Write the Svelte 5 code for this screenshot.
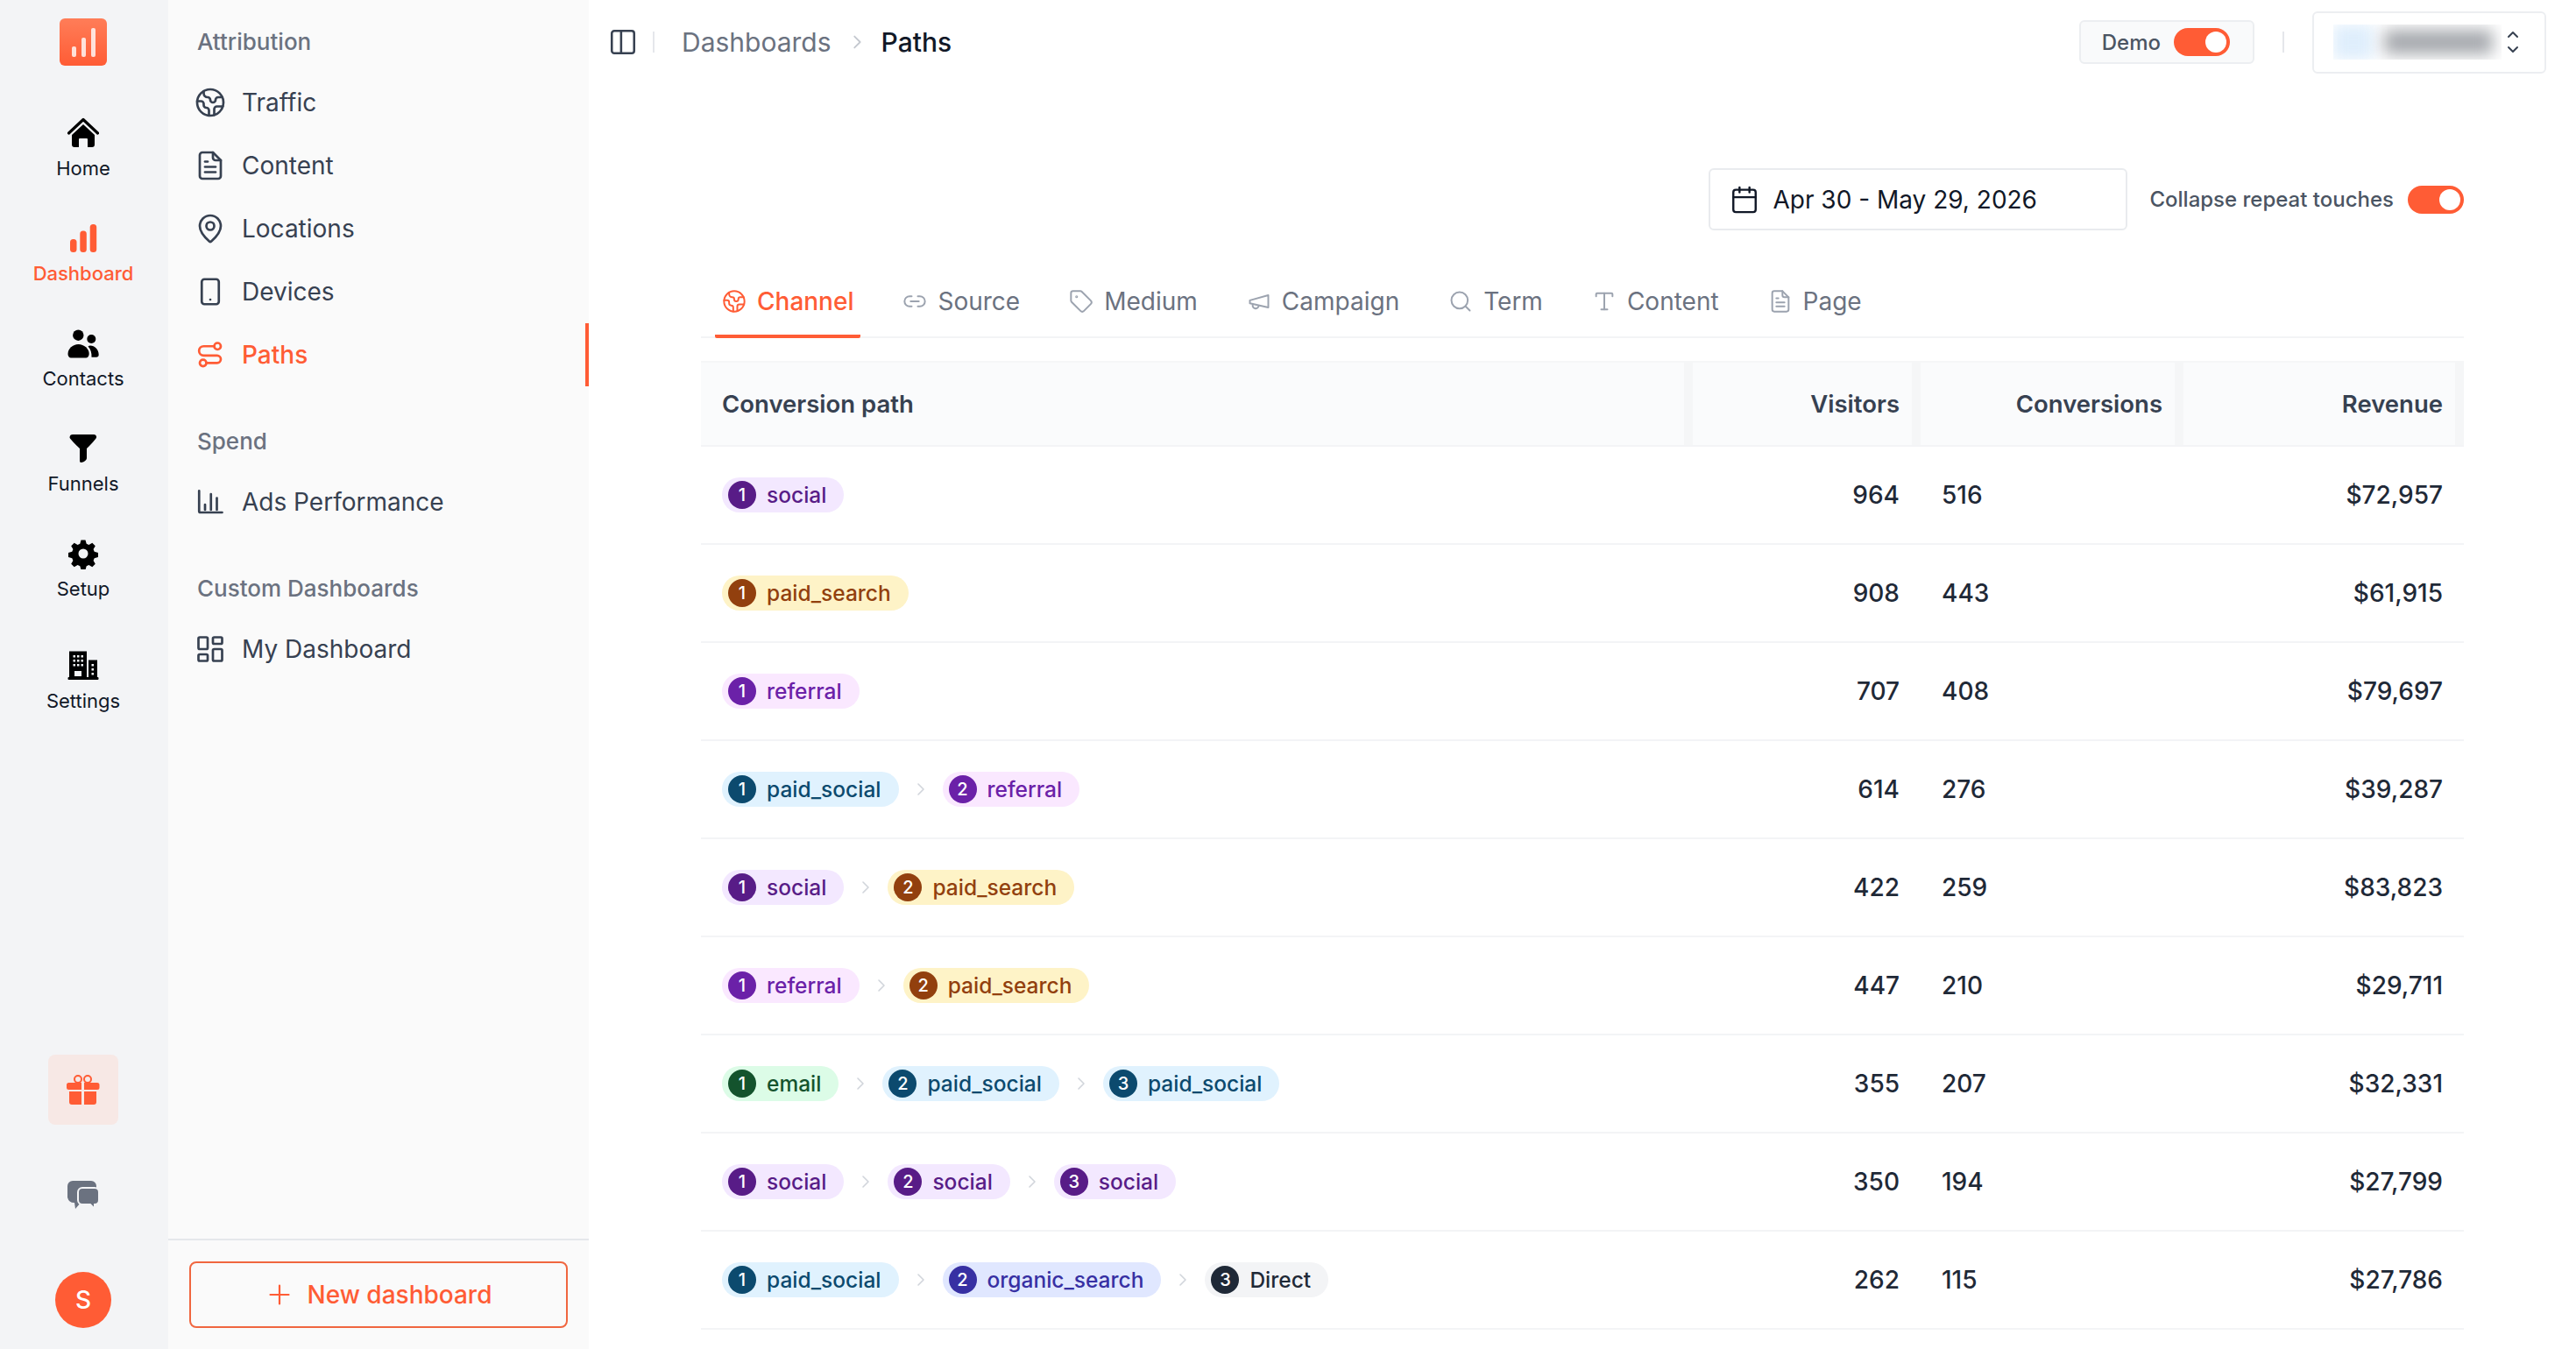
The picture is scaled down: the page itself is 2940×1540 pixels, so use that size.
<script>
	const icons = {
		earth:
			'<path d="M21.54 15H17a2 2 0 0 0-2 2v4.54"/><path d="M7 3.34V5a3 3 0 0 0 3 3a2 2 0 0 1 2 2c0 1.1.9 2 2 2a2 2 0 0 0 2-2c0-1.1.9-2 2-2h3.17"/><path d="M11 21.95V18a2 2 0 0 0-2-2a2 2 0 0 1-2-2v-1a2 2 0 0 0-2-2H2.05"/><circle cx="12" cy="12" r="10"/>',
		file: '<path d="M14 2H6a2 2 0 0 0-2 2v16a2 2 0 0 0 2 2h12a2 2 0 0 0 2-2V8z"/><path d="M14 2v4a2 2 0 0 0 2 2h4"/><path d="M8 13h8"/><path d="M8 17h8"/><path d="M8 9h2"/>',
		pin: '<path d="M20 10c0 4.993-5.539 10.193-7.399 11.799a1 1 0 0 1-1.202 0C9.539 20.193 4 14.993 4 10a8 8 0 0 1 16 0"/><circle cx="12" cy="10" r="3"/>',
		tablet: '<rect x="5.5" y="2.5" width="13" height="19" rx="2"/><path d="M12 18h.01"/>',
		route:
			'<circle cx="17.5" cy="5.5" r="2.5"/><circle cx="6.5" cy="18.2" r="2.5"/><path d="M15 5.5H7a3.55 3.55 0 0 0 0 7.1h10.2a2.8 2.8 0 0 1 0 5.6H9"/>',
		chart: '<path d="M3.5 3.5V19a1 1 0 0 0 1 1H21"/><path d="M8 18v-4"/><path d="M12.5 18V6"/><path d="M17 18V9"/>',
		grid: '<rect x="3" y="3" width="7" height="9" rx="1"/><rect x="14" y="3" width="7" height="5" rx="1"/><rect x="14" y="12" width="7" height="9" rx="1"/><rect x="3" y="16" width="7" height="5" rx="1"/>',
		link: '<path d="M9 17H7A5 5 0 0 1 7 7h2"/><path d="M15 7h2a5 5 0 1 1 0 10h-2"/><path d="M8 12h8"/>',
		tag: '<path d="M12.586 2.586A2 2 0 0 0 11.172 2H4a2 2 0 0 0-2 2v7.172a2 2 0 0 0 .586 1.414l8.704 8.704a2.426 2.426 0 0 0 3.42 0l6.58-6.58a2.426 2.426 0 0 0 0-3.42z"/><circle cx="7.5" cy="7.5" r=".5"/>',
		megaphone: '<path d="m3 11 18-5v12L3 14v-3z"/><path d="M11.6 16.8a3 3 0 1 1-5.8-1.6"/>',
		search: '<path d="m21 21-4.34-4.34"/><circle cx="11" cy="11" r="8"/>',
		type: '<path d="M12 4v16"/><path d="M4 7V5a1 1 0 0 1 1-1h14a1 1 0 0 1 1 1v2"/><path d="M9 20h6"/>'
	};

	const railIcons = {
		home: '<path d="M1.5 18 18 2.5 34.500 18" fill="none" stroke="currentColor" stroke-width="3.2" stroke-linecap="round" stroke-linejoin="round"/><path d="M5 20 18 8l13 12v11a3 3 0 0 1-3 3h-5v-9a1 1 0 0 0-1-1h-8a1 1 0 0 0-1 1v9H8a3 3 0 0 1-3-3z"/>',
		dashboard:
			'<rect x="3" y="19" width="7.500" height="15" rx="3.500"/><rect x="14.300" y="9.500" width="7.500" height="24.500" rx="3.500"/><rect x="25.700" y="2" width="7.500" height="32" rx="3.500"/>',
		contacts:
			'<circle cx="12.300" cy="8.700" r="6.200"/><path d="M.5 30C.5 24 6 19 12.500 19S24.700 24 24.700 30c0 2.500-1.700 4.500-3.700 4.500H4C2 34.500.5 32.500.5 30z"/><circle cx="27.300" cy="13" r="5"/><path d="M26 20.500c5 0 9.700 4.500 9.700 10.500 0 1.800-1.200 2.800-2.700 2.800h-5.500c.3-5-1-9.300-4-12.300.8-.7 1.500-1 2.500-1z"/>',
		funnels:
			'<path d="M2.500 5.500C2.500 3 4 2 6 2h24c2 0 3.500 1.500 3 3.500-1 2.500-8 9.500-11 12.500v11c0 2-3.500 5-6.500 5-1 0-1.500-.7-1.500-2V18C11 15 3.500 8 2.500 5.500z"/>',
		setup:
			'<path fill-rule="evenodd" d="M15.500 2.500h5l1.200 4.300 2.700 1.100 3.900-2.200 3.500 3.500-2.200 3.900 1.100 2.700 4.300 1.200v5l-4.300 1.200-1.100 2.700 2.200 3.900-3.500 3.500-3.900-2.200-2.700 1.100-1.200 4.300h-5l-1.200-4.300-2.700-1.100-3.900 2.200-3.500-3.500 2.200-3.900-1.100-2.700-4.300-1.200v-5l4.300-1.200 1.100-2.700-2.200-3.900 3.500-3.500 3.900 2.200 2.700-1.100zM18 12.500a5.500 5.500 0 1 0 0 11 5.500 5.500 0 0 0 0-11z"/>',
		settings:
			'<path fill-rule="evenodd" d="M2 1.500h20v31h-20zM6.500 6v2.500h2.500V6zM11 6v2.500h2.500V6zM15.500 6v2.500H18V6zM6.500 11v2.500h2.500V11zM11 11v2.500h2.500V11zM15.500 11v2.500H18V11zM6.500 16v2.500h2.500V16zM11 16v2.500h2.500V16zM15.500 16v2.500H18V16zM8 24v6h8v-6z"/><rect x="0.500" y="31" width="35" height="3" rx="1"/><path fill-rule="evenodd" d="M24 11.500h10v20H24zM27.500 16v2.500H30V16zM27.500 21v2.500H30V21zM27.500 26v2.500H30V26z"/>'
	};

	const railItems = [
		{ label: 'Home', icon: 'home' },
		{ label: 'Dashboard', icon: 'dashboard', active: true },
		{ label: 'Contacts', icon: 'contacts' },
		{ label: 'Funnels', icon: 'funnels' },
		{ label: 'Setup', icon: 'setup' },
		{ label: 'Settings', icon: 'settings' }
	];

	const navGroups = [
		{
			title: 'Attribution',
			items: [
				{ label: 'Traffic', icon: 'earth' },
				{ label: 'Content', icon: 'file' },
				{ label: 'Locations', icon: 'pin' },
				{ label: 'Devices', icon: 'tablet' },
				{ label: 'Paths', icon: 'route', active: true }
			]
		},
		{ title: 'Spend', items: [{ label: 'Ads Performance', icon: 'chart' }] },
		{ title: 'Custom Dashboards', items: [{ label: 'My Dashboard', icon: 'grid' }] }
	];

	const tabs = [
		{ label: 'Channel', icon: 'earth', active: true },
		{ label: 'Source', icon: 'link' },
		{ label: 'Medium', icon: 'tag' },
		{ label: 'Campaign', icon: 'megaphone' },
		{ label: 'Term', icon: 'search' },
		{ label: 'Content', icon: 'type' },
		{ label: 'Page', icon: 'file' }
	];

	const rows = [
		{ path: ['social'], visitors: 964, conversions: 516, revenue: '$72,957' },
		{ path: ['paid_search'], visitors: 908, conversions: 443, revenue: '$61,915' },
		{ path: ['referral'], visitors: 707, conversions: 408, revenue: '$79,697' },
		{ path: ['paid_social', 'referral'], visitors: 614, conversions: 276, revenue: '$39,287' },
		{ path: ['social', 'paid_search'], visitors: 422, conversions: 259, revenue: '$83,823' },
		{ path: ['referral', 'paid_search'], visitors: 447, conversions: 210, revenue: '$29,711' },
		{ path: ['email', 'paid_social', 'paid_social'], visitors: 355, conversions: 207, revenue: '$32,331' },
		{ path: ['social', 'social', 'social'], visitors: 350, conversions: 194, revenue: '$27,799' },
		{ path: ['paid_social', 'organic_search', 'Direct'], visitors: 262, conversions: 115, revenue: '$27,786' }
	];
</script>

<div class="app">
	<aside class="rail">
		<div class="logo">
			<span class="logo-bar b1"></span>
			<span class="logo-bar b2"></span>
			<span class="logo-bar b3"></span>
		</div>
		<nav class="rail-nav">
			{#each railItems as item}
				<div class="rail-item" class:active={item.active} class:last={item.icon === 'settings'}>
					<svg class="rail-icon" viewBox="0 0 36 36" fill="currentColor">{@html railIcons[item.icon]}</svg>
					<span>{item.label}</span>
				</div>
			{/each}
		</nav>
		<div class="rail-bottom">
			<div class="gift">
				<svg width="38" height="36" viewBox="0 0 38 36" fill="#ff5c35">
					<ellipse cx="13" cy="6" rx="4" ry="4" fill="none" stroke="#ff5c35" stroke-width="2" />
					<ellipse cx="24" cy="6" rx="4" ry="4" fill="none" stroke="#ff5c35" stroke-width="2" />
					<path d="M2.500 10h14.500v8H2.500A2.500 2.500 0 0 1 0 15.500v-3A2.500 2.500 0 0 1 2.500 10zM20 10h15a2.500 2.500 0 0 1 2.500 2.500v3a2.500 2.500 0 0 1-2.500 2.500H20z" />
					<path d="M3 20h14v15H6a3 3 0 0 1-3-3zM20 20h14v12a3 3 0 0 1-3 3H20z" />
				</svg>
			</div>
			<svg class="chat" width="36" height="36" viewBox="0 0 36 36">
				<path d="M6 2h21a6 6 0 0 1 6 6v13a6 6 0 0 1-6 6H15l-6 7-1-7a8 8 0 0 1-8-6V8a6 6 0 0 1 6-6z" fill="#6b7280" />
				<path d="M17 10h14a5 5 0 0 1 5 5v9a5 5 0 0 1-5 5v5l-5-5h-9a5 5 0 0 1-5-5v-9a5 5 0 0 1 5-5z" fill="#6b7280" stroke="#f3f4f6" stroke-width="2" />
			</svg>
			<div class="avatar">S</div>
		</div>
	</aside>

	<aside class="sidebar">
		<div class="sidebar-scroll">
			{#each navGroups as group}
				<div class="nav-group">
					<div class="nav-title">{group.title}</div>
					{#each group.items as item}
						<div class="nav-item" class:active={item.active}>
							<svg class="nav-icon" viewBox="0 0 24 24" fill="none" stroke="currentColor" stroke-width="1.800" stroke-linecap="round" stroke-linejoin="round">{@html icons[item.icon]}</svg>
							<span>{item.label}</span>
						</div>
					{/each}
				</div>
			{/each}
		</div>
		<div class="sidebar-footer">
			<button class="new-btn">
				<svg width="24" height="24" viewBox="0 0 24 24" fill="none" stroke="currentColor" stroke-width="2.200" stroke-linecap="round"><path d="M12 1.500v21M1.500 12h21" /></svg>
				New dashboard
			</button>
		</div>
	</aside>

	<main class="main">
		<header class="topbar">
			<svg class="panel-icon" width="34" height="34" viewBox="0 0 24 24" fill="none" stroke="#374151" stroke-width="1.800" stroke-linejoin="round"><rect x="3" y="3" width="18" height="18" rx="2" /><path d="M10.500 3v18" /></svg>
			<span class="bar-divider"></span>
			<span class="crumb">Dashboards</span>
			<svg class="crumb-chevron" width="22" height="22" viewBox="0 0 24 24" fill="none" stroke="#c4c8cf" stroke-width="2" stroke-linecap="round" stroke-linejoin="round"><path d="m9 5 7 7-7 7" /></svg>
			<span class="crumb current">Paths</span>
			<div class="topbar-right">
				<div class="demo-box">
					<span>Demo</span>
					<span class="toggle"></span>
				</div>
				<span class="bar-divider wide"></span>
				<div class="account">
					<div class="account-blur">
						<span class="blur-blue"></span>
						<span class="blur-grey"></span>
					</div>
					<svg width="24" height="32" viewBox="0 0 24 32" fill="none" stroke="#374151" stroke-width="2" stroke-linecap="round" stroke-linejoin="round"><path d="m7 10 5-5 5 5" /><path d="m7 22 5 5 5-5" /></svg>
				</div>
			</div>
		</header>

		<section class="content">
			<div class="toolbar">
				<div class="date-picker">
					<svg width="34" height="34" viewBox="0 0 24 24" fill="none" stroke="#111827" stroke-width="1.700" stroke-linecap="round" stroke-linejoin="round"><path d="M8 2v4" /><path d="M16 2v4" /><rect x="3" y="4" width="18" height="18" rx="2" /><path d="M3 10h18" /></svg>
					<span>Apr 30 - May 29, 2026</span>
				</div>
				<span class="collapse-label">Collapse repeat touches</span>
				<span class="toggle"></span>
			</div>

			<div class="tabs">
				{#each tabs as tab}
					<div class="tab" class:active={tab.active}>
						<svg width="28" height="28" viewBox="0 0 24 24" fill="none" stroke="currentColor" stroke-width="1.700" stroke-linecap="round" stroke-linejoin="round">{@html icons[tab.icon]}</svg>
						<span>{tab.label}</span>
					</div>
				{/each}
			</div>

			<div class="table">
				<div class="row head">
					<div class="cell">Conversion path</div>
					<div class="cell right">Visitors</div>
					<div class="cell right">Conversions</div>
					<div class="cell right">Revenue</div>
				</div>
				{#each rows as row}
					<div class="row">
						<div class="cell path">
							{#each row.path as step, i}
								{#if i > 0}
									<svg class="step-chevron" width="16" height="20" viewBox="0 0 16 20" fill="none" stroke="#d1d5db" stroke-width="1.600" stroke-linecap="round" stroke-linejoin="round"><path d="m5 4 6 6-6 6" /></svg>
								{/if}
								<span class="pill {step}">
									<span class="num">{i + 1}</span>
									{step}
								</span>
							{/each}
						</div>
						<div class="cell num-right">{row.visitors}</div>
						<div class="cell">{row.conversions}</div>
						<div class="cell num-right">{row.revenue}</div>
					</div>
				{/each}
			</div>
		</section>
	</main>
</div>

<style>
	:global(body) {
		margin: 0;
		font-family: Inter, 'Liberation Sans', sans-serif;
		background: #fff;
	}

	.app {
		display: flex;
		width: 2940px;
		height: 1540px;
		overflow: hidden;
	}

	/* far left icon rail */
	.rail {
		width: 192px;
		flex: none;
		box-sizing: border-box;
		padding-right: 2px;
		background: #f3f4f6;
		display: flex;
		flex-direction: column;
		align-items: center;
	}

	.logo {
		width: 54px;
		height: 54px;
		margin-top: 21px;
		border-radius: 6px;
		background: linear-gradient(180deg, #ff7d58, #ff5c35);
		display: flex;
		align-items: flex-end;
		justify-content: center;
		gap: 6px;
		padding-bottom: 10px;
		box-sizing: border-box;
	}

	.logo-bar {
		width: 5px;
		border-radius: 2px;
		background: rgba(255, 255, 255, 0.8);
	}

	.b1 { height: 12px; }
	.b2 { height: 22px; }
	.b3 { height: 33px; }

	.rail-nav {
		margin-top: 59px;
		display: flex;
		flex-direction: column;
		align-items: center;
		gap: 0;
	}

	.rail-item {
		height: 120px;
		display: flex;
		flex-direction: column;
		align-items: center;
		font-size: 22px;
		color: #111827;
		line-height: 30px;
	}

	.rail-item.last {
		padding-top: 8px;
	}

	.rail-item.active {
		color: #ff5c35;
		font-weight: 500;
	}

	.rail-icon {
		width: 36px;
		height: 36px;
		margin-bottom: 7px;
		color: #000;
	}

	.rail-item.active .rail-icon {
		color: #ff5c35;
	}

	.rail-bottom {
		margin-top: auto;
		display: flex;
		flex-direction: column;
		align-items: center;
		padding-bottom: 24px;
	}

	.gift {
		width: 80px;
		height: 80px;
		border-radius: 8px;
		background: #f7e8e5;
		display: flex;
		align-items: center;
		justify-content: center;
	}

	.chat {
		margin-top: 62px;
	}

	.avatar {
		margin-top: 70px;
		width: 64px;
		height: 64px;
		border-radius: 50%;
		background: #ff5c35;
		color: #fff;
		font-size: 28px;
		font-weight: 500;
		display: flex;
		align-items: center;
		justify-content: center;
	}

	/* second level nav */
	.sidebar {
		width: 480px;
		flex: none;
		background: #fafafa;
		display: flex;
		flex-direction: column;
	}

	.sidebar-scroll {
		flex: 1;
		padding-top: 32px;
	}

	.nav-group {
		margin-bottom: 47px;
	}

	.nav-title {
		height: 32px;
		line-height: 32px;
		padding-left: 33px;
		font-size: 26px;
		font-weight: 500;
		color: #6b7280;
		margin-bottom: 17px;
	}

	.nav-item {
		position: relative;
		height: 72px;
		display: flex;
		align-items: center;
		gap: 18px;
		padding-left: 30px;
		font-size: 28px;
		color: #374151;
	}

	.nav-item.active {
		color: #ff5c35;
		font-weight: 500;
	}

	.nav-item.active::after {
		content: '';
		position: absolute;
		right: 0;
		top: 0;
		bottom: 0;
		width: 4px;
		background: #ff5c35;
	}

	.nav-icon {
		width: 36px;
		height: 36px;
		flex: none;
	}

	.sidebar-footer {
		border-top: 2px solid #e5e7eb;
		padding: 24px 24px 24px 24px;
	}

	.new-btn {
		width: 432px;
		height: 76px;
		box-sizing: border-box;
		border: 2px solid #f0663f;
		border-radius: 8px;
		padding: 0 0 0 4px;
		background: transparent;
		color: #ff5c35;
		font-family: inherit;
		font-size: 28px;
		font-weight: 500;
		display: flex;
		align-items: center;
		justify-content: center;
		gap: 20px;
	}

	/* page */
	.main {
		flex: 1;
		min-width: 0;
		display: flex;
		flex-direction: column;
		background: #fff;
	}

	.topbar {
		height: 72px;
		margin-top: 12px;
		display: flex;
		align-items: center;
		padding: 0 34px 0 22px;
	}

	.bar-divider {
		width: 2px;
		height: 24px;
		background: #e5e7eb;
		margin: 0 31px 0 17px;
	}

	.crumb {
		font-size: 30px;
		color: #6b7280;
	}

	.crumb.current {
		color: #111827;
		font-weight: 500;
	}

	.crumb-chevron {
		margin: 0 17px 0 18px;
	}

	.topbar-right {
		margin-left: auto;
		display: flex;
		align-items: center;
	}

	.demo-box {
		height: 50px;
		box-sizing: border-box;
		padding: 0 26px 0 24px;
		display: flex;
		align-items: center;
		gap: 15px;
		background: #f9fafb;
		border: 2px solid #eceef1;
		border-radius: 6px;
		font-size: 24px;
		font-weight: 500;
		color: #4b5563;
	}

	.bar-divider.wide {
		margin: 0 32px;
	}

	.account {
		width: 267px;
		height: 71px;
		box-sizing: border-box;
		border: 2px solid #eceef1;
		border-radius: 6px;
		padding: 0 24px 0 22px;
		display: flex;
		align-items: center;
		justify-content: space-between;
	}

	.account-blur {
		width: 192px;
		height: 40px;
		overflow: hidden;
		display: flex;
		align-items: center;
		gap: 12px;
	}

	.blur-blue {
		width: 46px;
		height: 40px;
		background: #dfeefc;
		filter: blur(8px);
	}

	.blur-grey {
		width: 124px;
		height: 28px;
		background: #a6a9ae;
		filter: blur(9px);
	}

	.toggle {
		position: relative;
		width: 64px;
		height: 32px;
		flex: none;
		border-radius: 16px;
		background: #ff5c35;
	}

	.toggle::after {
		content: '';
		position: absolute;
		right: 4px;
		top: 4px;
		width: 24px;
		height: 24px;
		border-radius: 50%;
		background: #fff;
	}

	.content {
		padding: 108px 128px 0;
	}

	.toolbar {
		display: flex;
		align-items: center;
		justify-content: flex-end;
	}

	.date-picker {
		width: 478px;
		height: 71px;
		box-sizing: border-box;
		border: 2px solid #e9ebee;
		border-radius: 6px;
		padding: 0 22px;
		display: flex;
		align-items: center;
		gap: 15px;
		font-size: 28px;
		color: #111827;
	}

	.collapse-label {
		margin: 0 16px 0 25px;
		font-size: 24px;
		font-weight: 500;
		color: #4b5563;
	}

	.tabs {
		margin-top: 39px;
		height: 84px;
		display: flex;
		gap: 40px;
		border-bottom: 2px solid #f3f4f6;
		box-sizing: border-box;
		padding-left: 16px;
	}

	.tab {
		display: flex;
		align-items: center;
		gap: 12px;
		padding: 0 8px;
		font-size: 28px;
		color: #6b7280;
		margin-bottom: -2px;
		border-top: 4px solid transparent;
		border-bottom: 4px solid transparent;
		border-radius: 2px;
		box-sizing: border-box;
	}

	.tab svg {
		color: #9ca3af;
	}

	.tab.active {
		color: #ff5c35;
		font-weight: 500;
		border-bottom-color: #ff5c35;
	}

	.tab.active svg {
		color: #ff5c35;
	}

	.table {
		margin-top: 26px;
	}

	.row {
		display: grid;
		grid-template-columns: 1132px 260px 300px 320px;
		height: 112px;
		box-sizing: border-box;
		border-bottom: 2px solid #f3f4f6;
		font-size: 28px;
		font-weight: 500;
		color: #1f2937;
	}

	.row.head {
		height: 98px;
		border-top: 2px solid #f5f6f7;
		background: #fafbfc;
		font-size: 27.5px;
		font-weight: 600;
		color: #374151;
	}

	.cell {
		display: flex;
		align-items: center;
		padding-left: 24px;
	}

	.head .cell {
		border-right: 10px solid #f5f6f7;
	}

	.right {
		justify-content: flex-end;
		padding-right: 14px;
	}

	.num-right {
		justify-content: flex-end;
		padding-right: 24px;
	}

	.path {
		gap: 17px;
	}

	.pill {
		height: 40px;
		display: inline-flex;
		align-items: center;
		gap: 12px;
		padding: 0 20px 0 7px;
		border-radius: 20px;
		font-size: 24.5px;
		font-weight: 500;
	}

	.num {
		width: 32px;
		height: 32px;
		border-radius: 50%;
		color: #fff;
		font-size: 20px;
		display: flex;
		align-items: center;
		justify-content: center;
	}

	.social { background: #f3e8ff; color: #581c87; }
	.social .num { background: #581c87; }
	.paid_search { background: #fef3c7; color: #92400e; }
	.paid_search .num { background: #92400e; }
	.referral { background: #fae8ff; color: #6b21a8; }
	.referral .num { background: #6b21a8; }
	.paid_social { background: #e0f2fe; color: #0c4a6e; }
	.paid_social .num { background: #0c4a6e; }
	.email { background: #dcfce7; color: #14532d; }
	.email .num { background: #14532d; }
	.organic_search { background: #e0e7ff; color: #3730a3; }
	.organic_search .num { background: #3730a3; }
	.Direct { background: #f3f4f6; color: #1f2937; }
	.Direct .num { background: #1f2937; }
</style>
